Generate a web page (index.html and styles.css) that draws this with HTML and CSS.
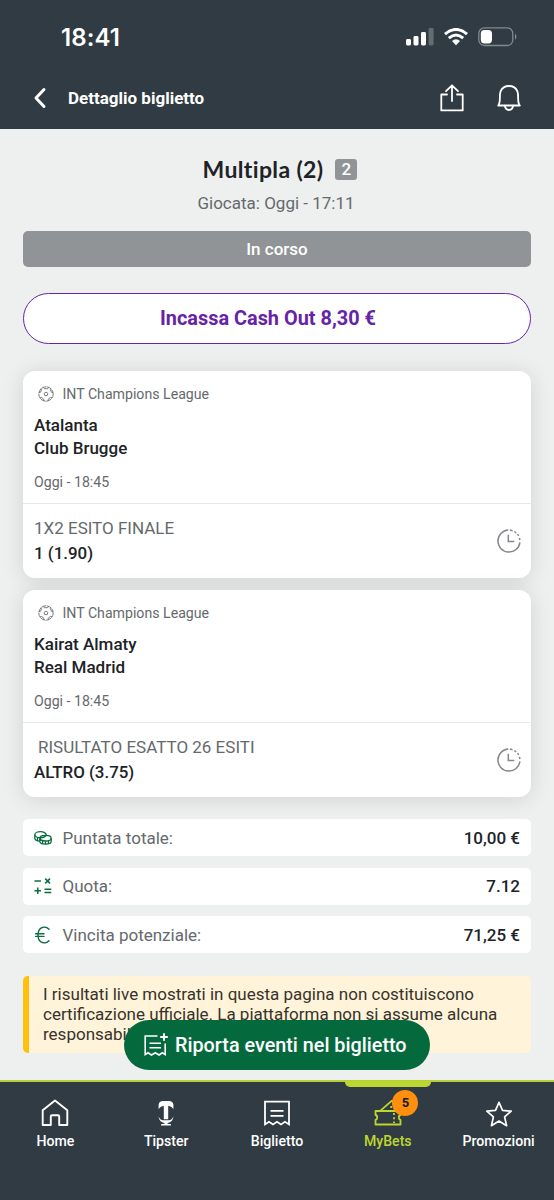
FILE: index.html
```html
<!DOCTYPE html>
<html lang="it">
<head>
<meta charset="utf-8">
<title>Dettaglio biglietto</title>
<link rel="stylesheet" href="styles.css">
</head>
<body>
<svg class="defs" aria-hidden="true">
  <symbol id="ball" viewBox="0 0 16 16">
    <g fill="none" stroke="#6b6e72" stroke-width="0.9">
      <circle cx="8" cy="8" r="7.2" stroke-dasharray="5.2 0.6"/>
      <path d="M8 6.1 9.9 7.4 9.2 9.6H6.8L6.1 7.4Z"/>
      <path d="M5.3 1.3 6.3 2.7H9.7L10.7 1.3M1 6.6 2.6 6.2 3.6 3.5 2.9 2.8M13.1 2.8 12.4 3.5 13.4 6.2 15 6.6M2 11.8 3.6 11.5 5.8 13.2 5.7 14.9M10.3 14.9 10.2 13.2 12.4 11.5 14 11.8"/>
    </g>
  </symbol>
  <symbol id="clock" viewBox="0 0 24 24">
    <g fill="none" stroke="#85888b" stroke-width="1.5">
      <path d="M11.3 1.1A11 11 0 1 0 22.9 13.3"/>
      <path d="M12.9 1.1 15.6 1.7M17.4 2.5 19.2 3.8M20.5 5.1 21.7 6.9M22.4 8.8 22.9 11.1"/>
      <path d="M11.3 5.7V12.4H17.3"/>
    </g>
  </symbol>
</svg>
<div class="app">
  <header class="header">
    <div class="status">
      <span class="time">18:41</span>
      <svg class="signal" width="28" height="18" viewBox="0 0 28 18" fill="#fff"><rect x="0" y="11" width="5" height="6.5" rx="1.4"/><rect x="7.5" y="8" width="5" height="9.5" rx="1.4"/><rect x="15" y="4" width="5" height="13.5" rx="1.4"/><rect x="22.6" y="0" width="5" height="17.5" rx="1.4" opacity=".25"/></svg>
      <svg class="wifi" width="24" height="18" viewBox="0 0 24 18"><g fill="none" stroke="#fff" stroke-width="3.1"><path d="M1 6.1Q12-3.1 23 6.1"/><path d="M4.8 10.1Q12 3.9 19.2 10.1"/></g><path d="M8 13Q12 9.4 16 13L12 17.2Z" fill="#fff"/></svg>
      <svg class="battery" width="40" height="20" viewBox="0 0 40 20"><rect x=".8" y=".9" width="34" height="17.6" rx="5.6" fill="none" stroke="#808a8f" stroke-width="1.3"/><rect x="2.8" y="3" width="11.2" height="13.4" rx="3.6" fill="#fff"/><path d="M37 6.5Q40 9.7 37 13Z" fill="#808a8f"/></svg>
    </div>
    <div class="toolbar">
      <svg class="back" width="14" height="22" viewBox="0 0 14 22" fill="none" stroke="#fff" stroke-width="3" stroke-linecap="round" stroke-linejoin="round"><path d="M11 2.5 3 11 11 19.5"/></svg>
      <h1 class="page-title">Dettaglio biglietto</h1>
      <svg class="share" width="24" height="28" viewBox="0 0 24 28" fill="none" stroke="#fff" stroke-width="1.8" stroke-linecap="round" stroke-linejoin="round"><path d="M7 10.5H1.3V26.4H22.7V10.5H17M12 17V1.3M6 7.2 12 1.3 18 7.2"/></svg>
      <svg class="bell" width="24" height="28" viewBox="0 0 24 28" fill="none" stroke="#fff" stroke-width="1.8" stroke-linecap="round" stroke-linejoin="round"><path d="M1.2 21.5C4.2 18 1.9 11.5 3.6 7.3C5 3.8 8.2 2 12 2S19 3.8 20.4 7.3C22.1 11.5 19.8 18 22.8 21.5Z"/><path d="M7.9 21.7C8.2 24.8 9.6 26 12 26S15.8 24.8 16.1 21.7"/></svg>
    </div>
  </header>

  <main class="content">
    <div class="ticket-title"><h2 class="multi">Multipla (2)</h2><span class="count">2</span></div>
    <p class="played">Giocata: Oggi - 17:11</p>
    <div class="state">In corso</div>
    <button class="cashout"><span>Incassa Cash Out 8,30 €</span></button>

    <section class="cards">
      <article class="card">
        <div class="event">
          <div class="league"><svg width="16" height="16"><use href="#ball"/></svg><span>INT Champions League</span></div>
          <div class="team first">Atalanta</div>
          <div class="team">Club Brugge</div>
          <div class="when">Oggi - 18:45</div>
        </div>
        <div class="bet">
          <div><div class="market">1X2 ESITO FINALE</div><div class="pick">1 (1.90)</div></div>
          <svg width="24" height="24"><use href="#clock"/></svg>
        </div>
      </article>
      <article class="card">
        <div class="event">
          <div class="league"><svg width="16" height="16"><use href="#ball"/></svg><span>INT Champions League</span></div>
          <div class="team first">Kairat Almaty</div>
          <div class="team">Real Madrid</div>
          <div class="when">Oggi - 18:45</div>
        </div>
        <div class="bet">
          <div><div class="market indent">RISULTATO ESATTO 26 ESITI</div><div class="pick">ALTRO (3.75)</div></div>
          <svg width="24" height="24"><use href="#clock"/></svg>
        </div>
      </article>
    </section>

    <dl class="totals">
      <div class="total">
        <svg width="18" height="16" viewBox="0 0 18 16" fill="none" stroke="#0b6d42" stroke-width="1.3"><ellipse cx="6.5" cy="4.7" rx="5.7" ry="3"/><path d="M.8 4.7V8C.8 9.8 3 11 6 11.2M3.5 7.6V10.3M6.5 8V11M.8 7.3"/><ellipse cx="11.5" cy="8.2" rx="5.7" ry="2.8"/><path d="M5.8 8.2V11.3C5.8 13 8.3 14.2 11.5 14.2S17.2 13 17.2 11.3V8.2M8.6 10.8V13.5M11.5 11.1V14M14.5 10.8V13.5M12.2 4.7V5.6"/></svg>
        <dt>Puntata totale:</dt><dd>10,00 €</dd>
      </div>
      <div class="total">
        <svg width="18" height="16" viewBox="0 0 18 16" fill="none" stroke="#0b6d42" stroke-width="1.5"><path d="M.5 3H7M11.2.6 16 5.4M16 .6 11.2 5.4M.5 12.8H7M3.8 9.5V16M10.5 11.2H17.3M10.5 14.4H17.3"/></svg>
        <dt>Quota:</dt><dd>7.12</dd>
      </div>
      <div class="total">
        <svg width="18" height="18" viewBox="0 0 18 18" fill="none" stroke="#0b6d42" stroke-width="1.4" stroke-linecap="round"><path d="M15 3.3C13 1.2 9.5.5 7 2.1C3 4.6 3 13.4 7 15.9C9.5 17.5 13 16.8 15 14.7M1.6 7.7H10M1.6 10.4H10"/></svg>
        <dt>Vincita potenziale:</dt><dd>71,25 €</dd>
      </div>
    </dl>

    <div class="notice">I risultati live mostrati in questa pagina non costituiscono<br>certificazione ufficiale. La piattaforma non si assume alcuna<br>responsabilità per l’utilizzo dei dati qui riportati.</div>
  </main>

  <button class="fab">
    <svg width="24" height="25" viewBox="0 0 24 25" fill="none" stroke="#fff" stroke-width="1.6"><path d="M13.5 3H1.2V21.6L4 19.8 7.5 22 11.3 19.8 15 22 18.4 19.8 21.2 21.6V10.5M5.5 10.3H17M5.5 14.8H17"/><path d="M20 .2V7.8M16.2 4H23.8" stroke-width="2"/></svg>
    <span>Riporta eventi nel biglietto</span>
  </button>

  <nav class="nav">
    <a class="tab">
      <svg width="28" height="28" viewBox="0 0 28 28" fill="none" stroke="#fff" stroke-width="1.9" stroke-linejoin="round"><path d="M1.7 11.2 14 1.4 26.3 11.2V26H18.2V17.5Q18.2 16.3 17 16.3H11Q9.8 16.3 9.8 17.5V26H1.7Z"/></svg>
      <span>Home</span>
    </a>
    <a class="tab">
      <svg width="28" height="28" viewBox="0 0 28 28" fill="#fff"><path d="M6.6 10V5.5Q7.2 2 11 2H17Q20.8 2 21.4 5.5V10Q19.5 7 16.2 6.8V20.2H11.8V6.8Q8.5 7 6.6 10Z"/><path d="M6.5 17.2Q8 21.3 11.4 21.3H16.6Q20 21.3 21.5 17.2Q20.8 23.4 15.5 23.9V24.8L19 25.3V26.5H9V25.3L12.5 24.8V23.9Q7.2 23.4 6.5 17.2Z"/></svg>
      <span>Tipster</span>
    </a>
    <a class="tab">
      <svg width="28" height="28" viewBox="0 0 28 28" fill="none" stroke="#fff" stroke-width="1.8"><path d="M2 2.6H26V25.4L22 22.8 18 25.4 14 22.8 10 25.4 6 22.8 2 25.4Z"/><path d="M7.5 11.8H20.5M7.5 16.8H20.5"/></svg>
      <span>Biglietto</span>
    </a>
    <a class="tab active">
      <svg width="28" height="28" viewBox="0 0 28 28" fill="none" stroke="#bed730" stroke-width="1.8" stroke-linejoin="round"><path d="M1.5 12H26.5V16Q24.8 16.3 24.8 18.5T26.5 21V25.5H1.5V21Q3.2 20.7 3.2 18.5T1.5 16Z"/><path d="M6.5 11.6 18 1.6 25 11.6"/><path d="M20 14V24M17.2 7V11" stroke-dasharray="2 2.2"/></svg>
      <b class="badge">5</b>
      <span>MyBets</span>
    </a>
    <a class="tab">
      <svg width="28" height="28" viewBox="0 0 28 28" fill="none" stroke="#fff" stroke-width="1.7" stroke-linejoin="round"><path d="M14 3.3 17.5 11.4 26.2 12.2 19.6 17.9 21.6 26.7 14 22.1 6.4 26.7 8.4 17.9 1.8 12.2 10.5 11.4Z"/></svg>
      <span>Promozioni</span>
    </a>
  </nav>
</div>
</body>
</html>
```
FILE: styles.css
```css
* { box-sizing: border-box; margin: 0; padding: 0; }
body { font-family: Roboto, "Liberation Sans", sans-serif; color: #202326; background: #eef0f0; }
.defs { display: none; }
svg { flex: none; display: block; }
button { font: inherit; }
.app { position: relative; width: 554px; height: 1200px; display: flex; flex-direction: column; overflow: hidden; }

.header { flex: none; height: 129px; background: #303b43; color: #fff; }
.status { height: 70px; padding: 4px 36px 0 61px; display: flex; align-items: center; }
.time { flex: 1; font-family: Inter, sans-serif; font-size: 24px; font-weight: 600; letter-spacing: 0.1px; }
.signal { margin-right: 10px; }
.wifi { margin-right: 10px; }
.toolbar { height: 56px; padding: 0 33px; display: flex; align-items: center; }
.page-title { flex: 1; margin-left: 21px; font-size: 17px; font-weight: 700; }
.share { margin-right: 33px; }

.content { flex: 1; min-height: 0; overflow: hidden; padding: 0 23px; }
.ticket-title { margin-top: 25px; height: 30px; display: flex; align-items: center; justify-content: center; gap: 12px; padding-left: 6px; }
.multi { font-family: Lato, sans-serif; font-size: 23px; font-weight: 700; letter-spacing: 0.35px; font-variant-ligatures: none; }
.count { width: 22px; height: 21px; line-height: 21px; border-radius: 3px; background: #919496; color: #fff; font-size: 17px; font-weight: 500; text-align: center; }
.played { margin-top: 8px; height: 22px; line-height: 22px; padding-right: 2px; text-align: center; font-size: 17px; color: #65696c; }
.state { margin-top: 17px; height: 36px; line-height: 36px; border-radius: 5px; background: #919496; color: #fff; font-size: 17px; font-weight: 500; text-align: center; }
.cashout { display: block; width: 100%; margin-top: 26px; height: 51px; padding-right: 18px; border: 1.5px solid #6723a5; border-radius: 26px; background: #fff; color: #6723a5; font-size: 19.9px; font-weight: 700; text-align: center; }

.cards { margin-top: 27px; display: flex; flex-direction: column; gap: 12px; }
.card { height: 207px; border-radius: 12px; background: #fff; box-shadow: 0 2px 22px rgba(0, 0, 0, .12); }
.event { height: 133px; border-bottom: 1.5px solid #e7e8e9; padding: 12px 11px 0; }
.league { display: flex; align-items: center; gap: 9px; height: 21px; padding-left: 3.5px; font-size: 14.15px; color: #65696c; }
.team { height: 23px; line-height: 23px; font-size: 17px; font-weight: 500; }
.first { margin-top: 10px; }
.when { margin-top: 12px; height: 20px; line-height: 20px; font-size: 14.15px; color: #65696c; }
.bet { height: 74px; padding: 0 10px 1px 11px; display: flex; align-items: center; justify-content: space-between; }
.market { height: 25px; line-height: 25px; font-size: 17px; color: #65696c; }
.indent { padding-left: 4px; }
.pick { height: 25px; line-height: 25px; font-size: 16.9px; font-weight: 500; }

.totals { margin-top: 22px; display: flex; flex-direction: column; gap: 11.5px; }
.total { height: 37px; padding: 0 11px 0 10.5px; display: flex; align-items: center; border-radius: 5px; background: #fff; font-size: 17px; }
.total dt { flex: 1; margin-left: 11px; color: #65696c; }
.total dd { font-weight: 500; }

.notice { margin-top: 23px; height: 77px; padding: 8px 0 0 14px; border-left: 6px solid #ffbf0b; border-radius: 5px; background: #fff4d9; color: #35332c; font-size: 17px; line-height: 20px; white-space: nowrap; }

.fab { position: absolute; left: 124px; top: 1020px; width: 306px; height: 50px; padding-left: 20px; display: flex; align-items: center; gap: 7px; border: 0; border-radius: 25px; background: #046a3e; color: #fff; font-size: 19.8px; font-weight: 500; white-space: nowrap; }

.nav { flex: none; height: 120px; display: grid; grid-template-columns: repeat(5, 1fr); border-top: 2px solid #b6d03a; background: #303b43; color: #fff; font-size: 14.1px; font-weight: 500; }
.tab { position: relative; display: flex; flex-direction: column; align-items: center; padding-top: 17px; }
.tab span { margin-top: 5px; line-height: 18px; }
.active { color: #bed730; }
.active::before { content: ""; position: absolute; top: -1px; left: 12.5px; width: 86px; height: 6px; border-radius: 0 0 5px 5px; background: #bed730; }
.badge { position: absolute; left: 60px; top: 8px; width: 26px; height: 26px; line-height: 26px; border-radius: 50%; background: #ff8f0c; color: #15181a; font-size: 13px; font-weight: 700; text-align: center; }
```
